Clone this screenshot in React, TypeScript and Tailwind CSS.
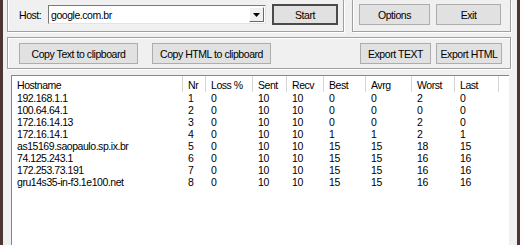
const columns = [
  { label: "Hostname", w: "w-[171px]" },
  { label: "Nr", w: "w-[23px]" },
  { label: "Loss %", w: "w-[47px]" },
  { label: "Sent", w: "w-[34px]" },
  { label: "Recv", w: "w-[37px]" },
  { label: "Best", w: "w-[42px]" },
  { label: "Avrg", w: "w-[46px]" },
  { label: "Worst", w: "w-[43px]" },
  { label: "Last", w: "w-[44px]" },
];

const rows = [
  ["192.168.1.1", "1", "0", "10", "10", "0", "0", "2", "0"],
  ["100.64.64.1", "2", "0", "10", "10", "0", "0", "0", "0"],
  ["172.16.14.13", "3", "0", "10", "10", "0", "0", "2", "0"],
  ["172.16.14.1", "4", "0", "10", "10", "1", "1", "2", "1"],
  ["as15169.saopaulo.sp.ix.br", "5", "0", "10", "10", "15", "15", "18", "15"],
  ["74.125.243.1", "6", "0", "10", "10", "15", "15", "16", "16"],
  ["172.253.73.191", "7", "0", "10", "10", "15", "15", "16", "16"],
  ["gru14s35-in-f3.1e100.net", "8", "0", "10", "10", "15", "15", "16", "16"],
];

const WinButton = ({
  label,
  w,
  primary = false,
}: {
  label: string;
  w: string;
  primary?: boolean;
}) => (
  <div
    className={`${w} flex h-[21px] shrink-0 items-center justify-center whitespace-nowrap bg-[#e1e1e1] ${
      primary ? "border-2 border-[#4b4b4b]" : "border border-[#adadad]"
    }`}
  >
    {label}
  </div>
);

const App = () => {
  return (
    <div className="flex h-[245px] w-[520px] overflow-hidden bg-[#f0f0f0] font-['Liberation_Sans',Arial,sans-serif] text-[10.5px] leading-[12px] tracking-[-0.45px] text-black">
      <div className="w-[3px] shrink-0 bg-[#4f3434]" />
      <div className="flex w-[514px] shrink-0 flex-col pl-[4px] pr-[6px]">
        {/* host / actions */}
        <div className="flex h-[32px] gap-[8px]">
          <div className="flex h-[32px] w-[337px] items-start border border-t-0 border-[#a0a0a0] pl-[11px] shadow-[inset_1px_0_0_#fff,1px_1px_0_#fff]">
            <span className="mt-[9px] w-[29px]">Host:</span>
            <div className="mt-[5px] flex h-[19px] w-[218px] border border-[#7a7a7a] border-b-[#e3e3e3] border-r-[#e3e3e3] bg-white">
              <span className="grow pl-[2px] pt-[3px]">google.com.br</span>
              <div className="m-[1px] flex w-[15px] items-center justify-center border border-[#fff] border-b-[#696969] border-r-[#696969] bg-[#f0f0f0]">
                <svg width="7" height="4" viewBox="0 0 7 4">
                  <path d="M0 0h7L3.5 4z" fill="#000" />
                </svg>
              </div>
            </div>
            <div className="ml-[6px] mt-[4px]">
              <WinButton label="Start" w="w-[66px]" primary />
            </div>
          </div>
          <div className="flex h-[32px] w-[159px] items-start gap-[6px] border border-t-0 border-[#a0a0a0] pl-[6px] pt-[4px] shadow-[inset_1px_0_0_#fff,1px_1px_0_#fff]">
            <WinButton label="Options" w="w-[71px]" />
            <WinButton label="Exit" w="w-[65px]" />
          </div>
        </div>

        {/* export */}
        <div className="mt-[5px] flex h-[32px] w-[504px] items-start justify-between border border-[#a0a0a0] pl-[11px] pr-[8px] pt-[5px] shadow-[inset_1px_1px_0_#fff,1px_1px_0_#fff]">
          <div className="flex gap-[14px]">
            <WinButton label="Copy Text to clipboard" w="w-[119px]" />
            <WinButton label="Copy HTML to clipboard" w="w-[119px]" />
          </div>
          <div className="flex gap-[5px]">
            <WinButton label="Export TEXT" w="w-[71px]" />
            <WinButton label="Export HTML" w="w-[66px]" />
          </div>
        </div>

        {/* list view */}
        <div className="ml-[4px] mt-[6px] w-[498px] grow border-l border-t border-[#828790] bg-white">
          <div className="flex h-[16px]">
            {columns.map((c) => (
              <div
                key={c.label}
                className={`${c.w} shrink-0 border-r border-[#d5d5d5] pl-[5px] pt-[3px]`}
              >
                {c.label}
              </div>
            ))}
          </div>
          {rows.map((r) => (
            <div key={r[0]} className="flex h-[12px]">
              {r.map((v, i) => (
                <div key={i} className={`${columns[i].w} shrink-0 pl-[5px]`}>
                  {v}
                </div>
              ))}
            </div>
          ))}
        </div>
      </div>
      <div className="w-[3px] shrink-0 bg-[#4f3434]" />
    </div>
  );
};

export default App;
